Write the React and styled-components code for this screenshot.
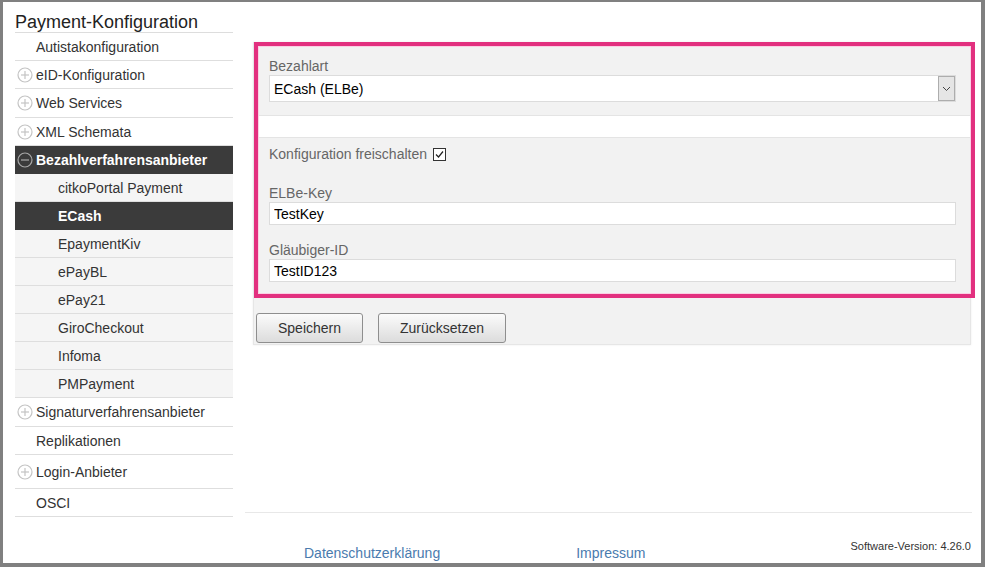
import React from "react";
import styled, { createGlobalStyle, css } from "styled-components";

const GlobalStyle = createGlobalStyle`
    body {
        margin: 0;
        font-family: "Liberation Sans", Arial, sans-serif;
        background: #fff;
    }
`

const Frame = styled.div`
    width: 985px;
    height: 567px;
    box-sizing: border-box;
    border-style: solid;
    border-color: #808080;
    border-width: 2px 4px 4px 3px;
    background: #fff;
    display: flex;
`
const Sidebar = styled.nav`
    width: 218px;
    margin-left: 12px;
    flex-shrink: 0;
`
const Title = styled.h1`
    margin: 0;
    padding-top: 10px;
    font-size: 18px;
    line-height: 20px;
    font-weight: normal;
    color: #222;
    border-bottom: 1px solid #ddd;
`
const Item = styled.div`
    display: flex;
    align-items: center;
    height: ${props => props.h || 27}px;
    border-bottom: 1px solid #dedede;
    font-size: 14px;
    color: #333;
    background: #fff;
    padding-left: ${props => props.sub ? 43 : props.icon ? 2 : 21}px;
    box-sizing: content-box;
    ${props => props.sub && css`background: #f5f5f5;`}
    ${props => props.active && css`
        background: #3b3b3b;
        color: #fff;
        font-weight: bold;
        border-bottom-color: #3b3b3b;
    `}
    svg {
        margin-right: 3px;
        flex-shrink: 0;
    }
`

const Main = styled.main`
    flex: 1;
    display: flex;
    flex-direction: column;
    padding: 40px 9px 0 12px;
`
const Panel = styled.section`
    margin-left: 8px;
    width: 718px;
    background: #f2f2f2;
    border: 1px solid #e6e6e6;
    box-shadow: 0 0 2px rgba(0, 0, 0, 0.08);
    box-sizing: border-box;
`
const Highlight = styled.div`
    border: 4px solid #e2307f;
    margin: -1px -5px 0 0;
    box-shadow: inset 0 0 0 1px #fbd0e4;
`
const Section = styled.div`
    padding: ${props => props.top ? "12px 15px 13px 11px" : "8px 15px 12px 11px"};
    display: flex;
    flex-direction: column;
`
const Band = styled.div`
    height: 21px;
    background: #fff;
    border-top: 1px solid #e4e4e4;
    border-bottom: 1px solid #e4e4e4;
    margin: 0 1px;
`
const Label = styled.label`
    font-size: 14px;
    line-height: 17px;
    color: #666;
    margin-top: ${props => props.gap || 0}px;
    display: flex;
    align-items: center;
`
const Select = styled.div`
    height: 27px;
    box-sizing: border-box;
    border: 1px solid #dcdcdc;
    background: #fff;
    display: flex;
    align-items: center;
    padding-left: 4px;
    font-size: 14px;
    color: #000;
    span {
        flex: 1;
    }
`
const DropButton = styled.div`
    width: 17px;
    height: 25px;
    box-sizing: border-box;
    border: 1px solid #adadad;
    background: #e5e5e5;
    display: flex;
    align-items: center;
    justify-content: center;
`
const Input = styled.input`
    height: 23px;
    box-sizing: border-box;
    border: 1px solid #dcdcdc;
    background: #fff;
    padding: 0 4px;
    font-family: "Liberation Sans", Arial, sans-serif;
    font-size: 14px;
    color: #000;
    outline: none;
`
const Check = styled.span`
    display: inline-flex;
    width: 13px;
    height: 13px;
    box-sizing: border-box;
    border: 1px solid #333;
    background: #fff;
    margin-left: 6px;
    align-items: center;
    justify-content: center;
`
const Buttons = styled.div`
    display: flex;
    gap: 15px;
    padding: 15px 0 1px 2px;
`
const Button = styled.button`
    width: ${props => props.width}px;
    height: 30px;
    border: 1px solid #8e8e8e;
    border-radius: 3px;
    background: linear-gradient(#fbfbfb, #dcdcdc);
    font-family: "Liberation Sans", Arial, sans-serif;
    font-size: 14px;
    color: #333;
    padding: 0;
`

const Footer = styled.footer`
    margin-top: auto;
    height: 50px;
    border-top: 1px solid #e8e8e8;
    display: flex;
    padding: 0 1px 0 59px;
`
const FootLink = styled.a`
    font-size: 14px;
    color: #4a7bae;
    text-decoration: none;
    align-self: flex-end;
    margin-bottom: 2px;
    margin-right: ${props => props.gap || 0}px;
`
const Version = styled.div`
    margin-left: auto;
    align-self: flex-end;
    margin-bottom: 11px;
    font-size: 11px;
    color: #333;
`

const PlusIcon = ({ minus }) => (
    <svg width="16" height="16" viewBox="0 0 16 16">
        <circle cx="8" cy="8" r="7" fill="none" stroke={minus ? "#a8a8a8" : "#c4c4c4"} strokeWidth="1.2"/>
        <line x1="4" y1="8" x2="12" y2="8" stroke={minus ? "#a8a8a8" : "#c4c4c4"} strokeWidth="1.2"/>
        {!minus && <line x1="8" y1="4" x2="8" y2="12" stroke="#c4c4c4" strokeWidth="1.2"/>}
    </svg>
)

const menu = [
    { label: "Autistakonfiguration" },
    { label: "eID-Konfiguration", icon: "plus" },
    { label: "Web Services", icon: "plus", h: 28 },
    { label: "XML Schemata", icon: "plus" },
    { label: "Bezahlverfahrensanbieter", icon: "minus", active: true },
    { label: "citkoPortal Payment", sub: true },
    { label: "ECash", sub: true, active: true },
    { label: "EpaymentKiv", sub: true },
    { label: "ePayBL", sub: true },
    { label: "ePay21", sub: true },
    { label: "GiroCheckout", sub: true },
    { label: "Infoma", sub: true },
    { label: "PMPayment", sub: true },
    { label: "Signaturverfahrensanbieter", icon: "plus", h: 28 },
    { label: "Replikationen" },
    { label: "Login-Anbieter", icon: "plus", h: 33 },
    { label: "OSCI" },
]

function App() {
    return (
        <>
            <GlobalStyle/>
            <Frame>
                <Sidebar>
                    <Title>Payment-Konfiguration</Title>
                    {menu.map(m => (
                        <Item key={m.label} sub={m.sub} active={m.active} icon={m.icon} h={m.h}>
                            {m.icon && <PlusIcon minus={m.icon === "minus"}/>}
                            {m.label}
                        </Item>
                    ))}
                </Sidebar>
                <Main>
                    <Panel>
                        <Highlight>
                            <Section top>
                                <Label>Bezahlart</Label>
                                <Select>
                                    <span>ECash (ELBe)</span>
                                    <DropButton>
                                        <svg width="9" height="6" viewBox="0 0 9 6">
                                            <polyline points="1,1 4.5,4.5 8,1" fill="none" stroke="#444" strokeWidth="1"/>
                                        </svg>
                                    </DropButton>
                                </Select>
                            </Section>
                            <Band/>
                            <Section>
                                <Label>
                                    Konfiguration freischalten
                                    <Check>
                                        <svg width="11" height="11" viewBox="0 0 11 11">
                                            <polyline points="2,5.5 4.5,8 9,2.5" fill="none" stroke="#222" strokeWidth="1.2"/>
                                        </svg>
                                    </Check>
                                </Label>
                                <Label gap={22}>ELBe-Key</Label>
                                <Input readOnly value="TestKey"/>
                                <Label gap={17}>Gläubiger-ID</Label>
                                <Input readOnly value="TestID123"/>
                            </Section>
                        </Highlight>
                        <Buttons>
                            <Button width={107}>Speichern</Button>
                            <Button width={128}>Zurücksetzen</Button>
                        </Buttons>
                    </Panel>
                    <Footer>
                        <FootLink href="#" gap={136}>Datenschutzerklärung</FootLink>
                        <FootLink href="#">Impressum</FootLink>
                        <Version>Software-Version: 4.26.0</Version>
                    </Footer>
                </Main>
            </Frame>
        </>
    )
}

export default App;
